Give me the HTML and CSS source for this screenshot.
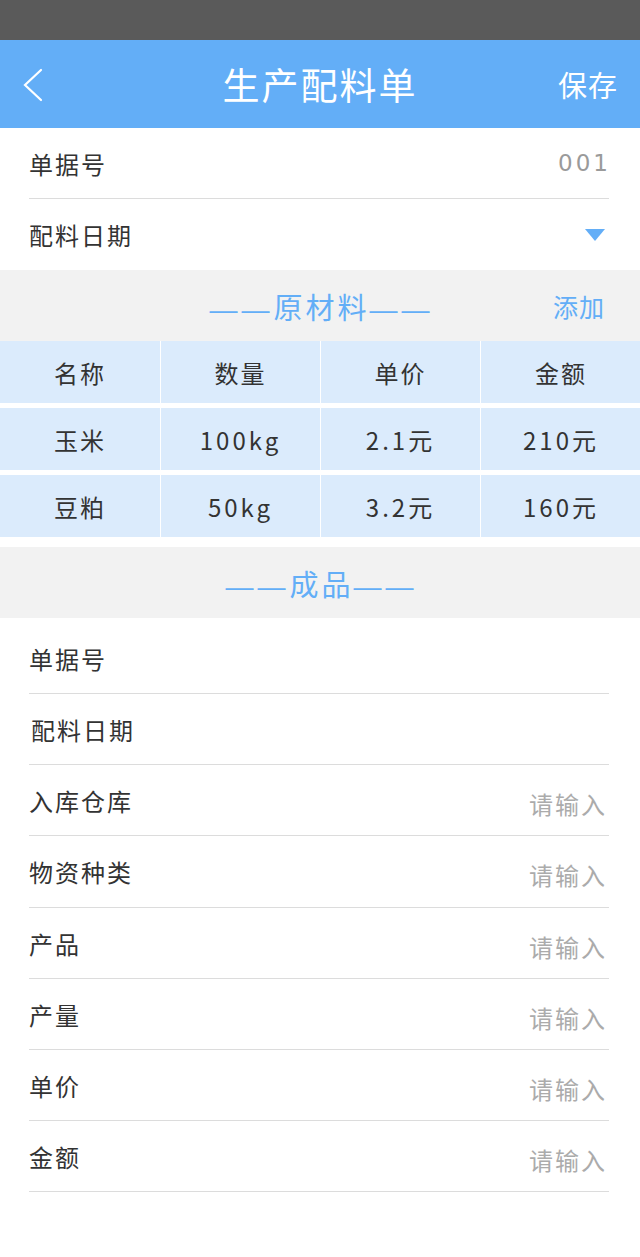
FILE: index.html
```html
<!DOCTYPE html>
<html lang="zh">
<head>
<meta charset="utf-8">
<title>生产配料单</title>
<link rel="stylesheet" href="styles.css">
</head>
<body>
<div class="status-bar"></div>
<header class="nav">
  <svg class="back" width="24" height="36" viewBox="0 0 24 36"><polyline points="19,3 3,18 19,33" fill="none" stroke="#fff" stroke-width="2.2" stroke-linecap="round" stroke-linejoin="miter"/></svg>
  <h1 class="title">生产配料单</h1>
  <span class="save">保存</span>
</header>

<section class="form top">
  <div class="row line"><span class="label">单据号</span><span class="value num">001</span></div>
  <div class="row"><span class="label">配料日期</span><span class="caret"></span></div>
</section>

<div class="section-head">
  <span class="section-title"><span class="dash">——</span>原材料<span class="dash">——</span></span>
  <span class="add">添加</span>
</div>

<div class="table">
  <div class="trow head"><div>名称</div><div>数量</div><div>单价</div><div>金额</div></div>
  <div class="trow"><div>玉米</div><div class="n">100kg</div><div class="n">2.1元</div><div class="n">210元</div></div>
  <div class="trow"><div>豆粕</div><div class="n">50kg</div><div class="n">3.2元</div><div class="n">160元</div></div>
</div>

<div class="section-head second">
  <span class="section-title"><span class="dash">——</span>成品<span class="dash">——</span></span>
</div>

<section class="form bottom">
  <div class="row line"><span class="label">单据号</span></div>
  <div class="row line"><span class="label indent">配料日期</span></div>
  <div class="row line"><span class="label">入库仓库</span><span class="placeholder">请输入</span></div>
  <div class="row line tall"><span class="label">物资种类</span><span class="placeholder">请输入</span></div>
  <div class="row line"><span class="label">产品</span><span class="placeholder">请输入</span></div>
  <div class="row line"><span class="label">产量</span><span class="placeholder">请输入</span></div>
  <div class="row line"><span class="label">单价</span><span class="placeholder">请输入</span></div>
  <div class="row line"><span class="label">金额</span><span class="placeholder">请输入</span></div>
</section>
</body>
</html>
```
FILE: styles.css
```css
* { box-sizing: border-box; }
html, body { margin: 0; padding: 0; }
body {
  width: 640px;
  height: 1257px;
  background: #fff;
  font-family: "Noto Sans CJK SC", "Noto Sans", sans-serif;
  color: #333;
  overflow: hidden;
}
.status-bar { height: 40px; background: #5a5a5a; }
.nav {
  height: 88px;
  background: #63aef7;
  display: flex;
  align-items: center;
  justify-content: space-between;
  padding: 0 22px 0 22px;
  position: relative;
  color: #fff;
}
.back { display: block; margin-top: 2px; }
.title {
  position: absolute;
  left: 0; right: 0;
  text-align: center;
  margin: 0;
  font-weight: normal;
  font-size: 37px;
  letter-spacing: 2px;
  line-height: 88px;
  pointer-events: none;
}
.save { font-size: 29px; letter-spacing: 1px; }

.form { padding: 0 31px 0 29px; }
.row {
  height: 71px;
  display: flex;
  align-items: center;
  justify-content: space-between;
}
.row.tall { height: 72px; }
.row.line { border-bottom: 1px solid #dcdcdc; }
.label { font-size: 24px; letter-spacing: 2px; color: #333; }
.label.indent { padding-left: 2px; }
.value.num {
  font-family: "DejaVu Sans", sans-serif;
  font-size: 23px;
  letter-spacing: 3px;
  color: #9a9a9a;
  margin-right: -2px;
}
.caret {
  width: 0; height: 0;
  border-left: 10px solid transparent;
  border-right: 10px solid transparent;
  border-top: 12px solid #63aef7;
  margin-right: 4px;
}
.section-head {
  height: 71px;
  background: #f2f2f2;
  display: flex;
  align-items: center;
  justify-content: center;
  position: relative;
}
.section-head.second { margin-top: 10px; }
.section-title {
  color: #63aef7;
  font-size: 29px;
  letter-spacing: 3px;
  margin-right: -3px;
}
.dash {
  font-family: "Liberation Sans", sans-serif;
  font-size: 28px;
  letter-spacing: 4px;
}
.add {
  position: absolute;
  right: 35px;
  top: 50%;
  transform: translateY(-50%);
  color: #63aef7;
  font-size: 25px;
  letter-spacing: 1px;
}
.table { display: flex; flex-direction: column; gap: 5px; }
.trow {
  display: grid;
  grid-template-columns: 160px 159px 159px 160px;
  column-gap: 1px;
  height: 62px;
}
.trow div {
  background: #dbebfc;
  display: flex;
  align-items: center;
  justify-content: center;
  font-size: 24px;
  letter-spacing: 2px;
  color: #333;
}
.trow div.n { letter-spacing: 3px; }
.bottom { padding-top: 5px; }
.placeholder {
  font-size: 24px;
  letter-spacing: 2px;
  color: #ababab;
  margin-top: 6px;
  margin-right: 2px;
}
```
